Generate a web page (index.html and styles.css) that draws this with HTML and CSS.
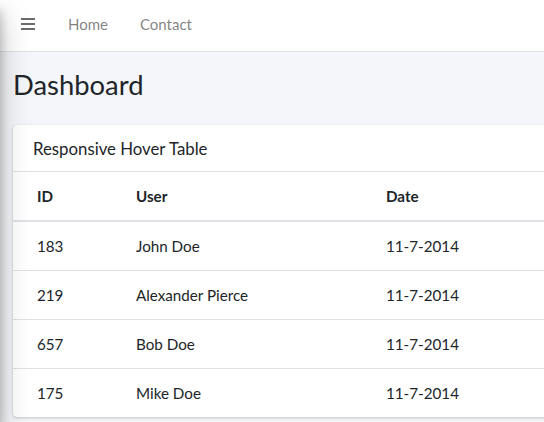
FILE: index.html
```html
<!DOCTYPE html>
<html lang="en">
<head>
<meta charset="utf-8">
<title>Dashboard</title>
<link rel="stylesheet" href="styles.css">
</head>
<body>
<div class="sidebar-shadow"></div>
<nav class="navbar">
  <a class="nav-link menu" href="#" aria-label="Menu">
    <svg width="14" height="12" viewBox="0 0 14 12"><rect x="0" y="0" width="14" height="2" fill="currentColor"/><rect x="0" y="5" width="14" height="2" fill="currentColor"/><rect x="0" y="10" width="14" height="2" fill="currentColor"/></svg>
  </a>
  <a class="nav-link" href="#">Home</a>
  <a class="nav-link" href="#">Contact</a>
</nav>
<main class="content">
  <h1 class="page-title">Dashboard</h1>
  <section class="card">
    <div class="card-header"><h3 class="card-title">Responsive Hover Table</h3></div>
    <table class="table">
      <thead>
        <tr><th class="c-id">ID</th><th class="c-user">User</th><th>Date</th></tr>
      </thead>
      <tbody>
        <tr><td class="c-id">183</td><td>John Doe</td><td>11-7-2014</td></tr>
        <tr><td class="c-id">219</td><td>Alexander Pierce</td><td>11-7-2014</td></tr>
        <tr><td class="c-id">657</td><td>Bob Doe</td><td>11-7-2014</td></tr>
        <tr><td class="c-id">175</td><td>Mike Doe</td><td>11-7-2014</td></tr>
      </tbody>
    </table>
  </section>
</main>
</body>
</html>
```
FILE: styles.css
```css
html, body {
  margin: 0;
  padding: 0;
  overflow: hidden;
  height: 100%;
}
body {
  background: #f4f6f9;
  color: #212529;
  font-family: "Lato", "Liberation Sans", sans-serif;
  font-size: 15.2px;
}
.sidebar-shadow {
  position: fixed;
  left: -250px;
  top: 0;
  width: 250px;
  height: 100%;
  box-shadow: 0 14px 28px rgba(0,0,0,.25), 0 10px 10px rgba(0,0,0,.22);
  z-index: 10;
}
.navbar {
  display: flex;
  align-items: flex-start;
  height: 52px;
  box-sizing: border-box;
  background: #fff;
  border-bottom: 1px solid #dee2e6;
  padding: 4px 0 0 5px;
}
.nav-link {
  color: rgba(0,0,0,.5);
  text-decoration: none;
  padding: 0 16px;
  line-height: 40px;
  height: 40px;
  display: flex;
  align-items: center;
  font-size: 15px;
}
.menu { color: #6c6c6c; padding-right: 17px; }
.menu svg { margin-top: -1px; }
.content {
  padding: 0 0 0 13px;
}
.page-title {
  font-size: 27.4px;
  font-weight: 400;
  margin: 0;
  padding: 15px 0 0 0;
  line-height: 36px;
  height: 58px;
}
.card {
  width: 620px;
  background: #fff;
  border-radius: 4px;
  box-shadow: 0 0 1px rgba(0,0,0,.125), 0 1px 3px rgba(0,0,0,.2);
  overflow: hidden;
}
.card-header {
  padding: 0 20px;
  height: 46px;
  display: flex;
  align-items: center;
  border-bottom: 1px solid #dee2e6;
}
.card-title {
  margin: 0;
  font-size: 16.8px;
  font-weight: 400;
}
.table {
  width: 100%;
  border-collapse: collapse;
}
.table th, .table td {
  text-align: left;
  padding: 0 12px;
  height: 48px;
  vertical-align: middle;
  border-top: 1px solid #dee2e6;
}
.table thead th {
  border-top: 0;
  border-bottom: 2px solid #dee2e6;
  font-weight: 700;
  height: 48px;
}
.table tbody tr:first-child td { border-top: 0; }
.c-id { width: 75px; padding-left: 24px !important; }
.c-user { width: 226px; }
```
